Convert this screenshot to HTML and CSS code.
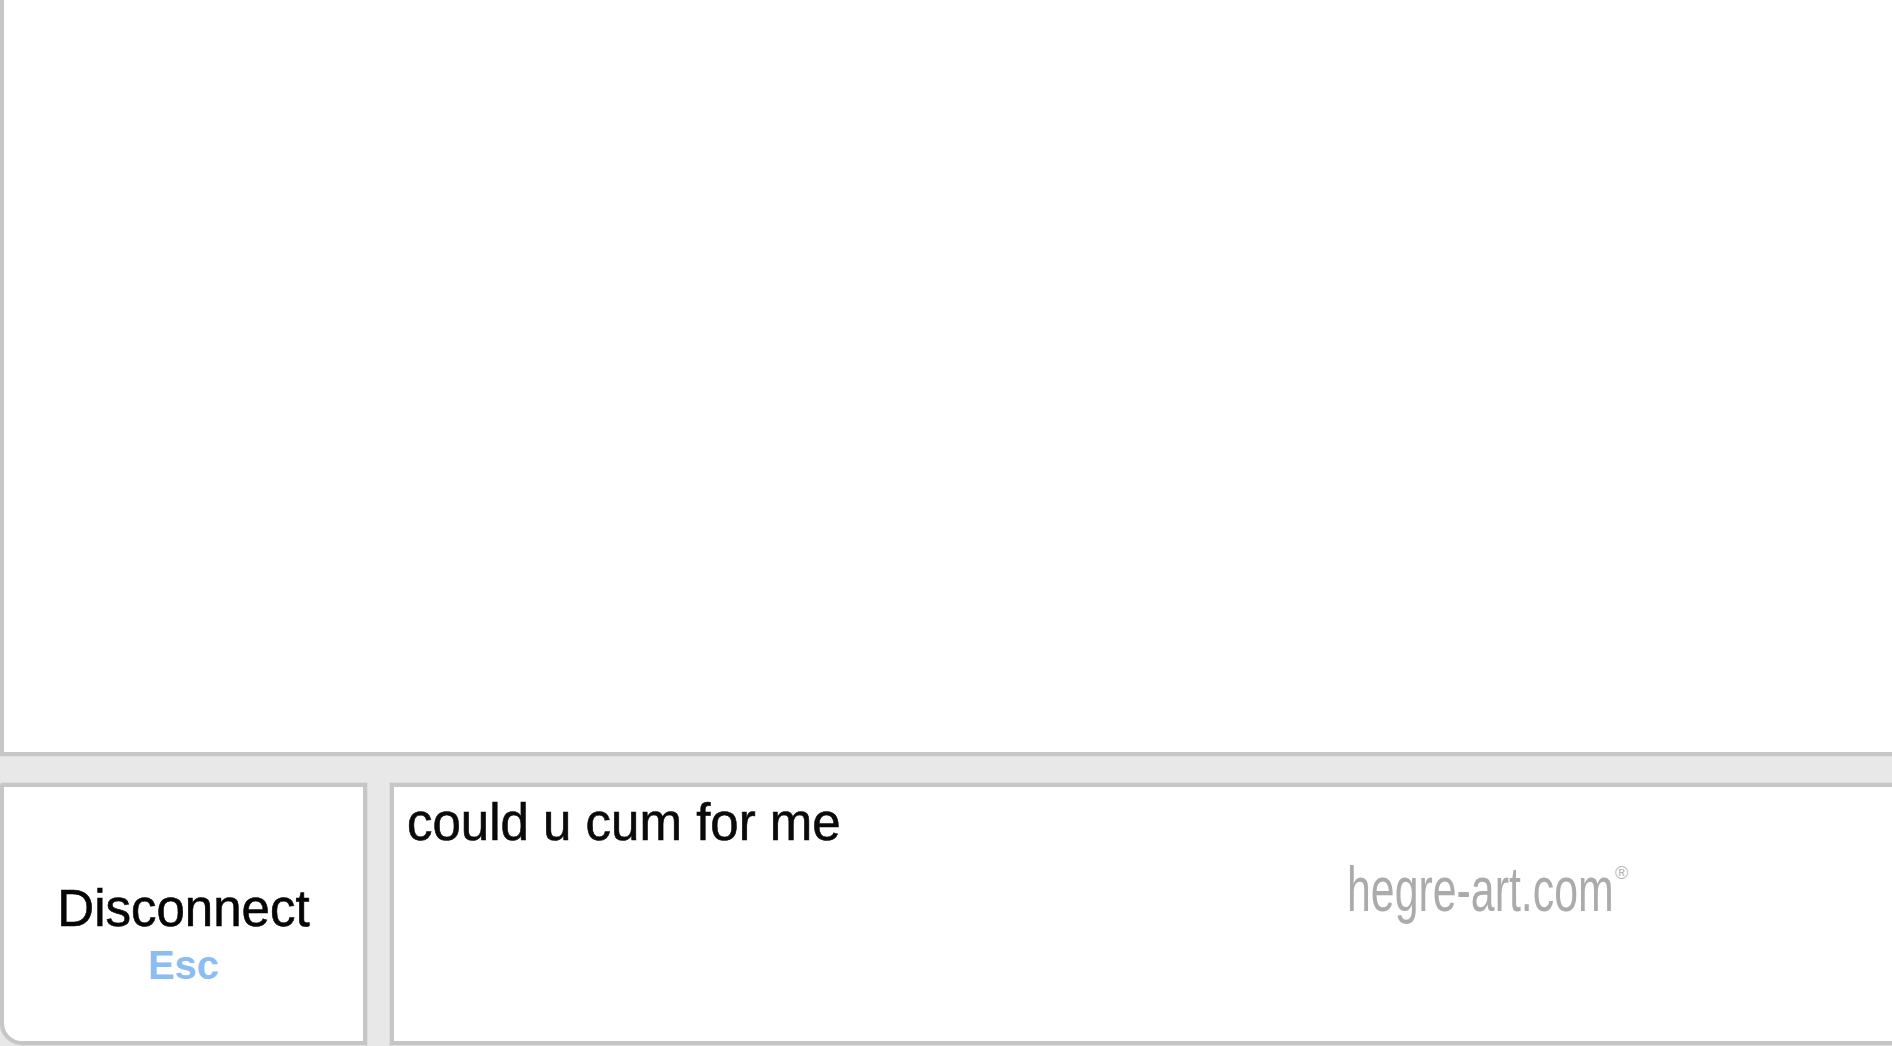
FILE: index.html
```html
<!DOCTYPE html>
<html lang="en">
<head>
<meta charset="utf-8">
<title>Chat</title>
<link rel="stylesheet" href="styles.css">
</head>
<body>
<div class="app">
  <div class="log"></div>
  <div class="controls">
    <button class="disconnect" type="button">
      <span class="btn-label">Disconnect</span>
      <span class="btn-key">Esc</span>
    </button>
    <div class="input-wrap">
      <textarea class="chat-input" rows="3">could u cum for me</textarea>
      <div class="watermark"><span class="wm-text">hegre-art.com</span><span class="wm-reg">&reg;</span></div>
    </div>
  </div>
</div>
</body>
</html>
```

FILE: styles.css
```css
html, body {
  margin: 0;
  padding: 0;
}

body {
  background: #e8e8e8;
  overflow: hidden;
  font-family: "Liberation Sans", Arial, sans-serif;
  width: 1892px;
  height: 1046px;
}

.app {
  width: 1930px;
  height: 1046px;
  display: flex;
  flex-direction: column;
  gap: 27px;
}

.log {
  box-sizing: border-box;
  height: 766px;
  margin-top: -10px;
  flex: none;
  background: #fff;
  border: 4px solid #c6c6c6;
  border-top: none;
  box-shadow: 0 0 0 1px #dedede;
}

.controls {
  display: flex;
  gap: 23px;
  height: 262px;
  flex: none;
}

.disconnect {
  box-sizing: border-box;
  width: 367px;
  flex: none;
  margin: 0;
  background: #fff;
  border: 4px solid #c6c6c6;
  border-radius: 3px 0 0 22px;
  box-shadow: 0 0 0 1px #dedede;
  display: flex;
  flex-direction: column;
  align-items: center;
  justify-content: flex-start;
  padding: 96px 0 0 0;
  font-family: "Liberation Sans", Arial, sans-serif;
  cursor: pointer;
}

.btn-label {
  font-size: 51px;
  line-height: 1;
  color: #050505;
  -webkit-text-stroke: 0.6px #050505;
}

.btn-key {
  margin-top: 11px;
  font-size: 40px;
  font-weight: bold;
  line-height: 1;
  color: #8cbdf2;
}

.input-wrap {
  position: relative;
  flex: 1;
  display: flex;
}

.chat-input {
  box-sizing: border-box;
  flex: 1;
  margin: 0;
  background: #fff;
  border: 4px solid #c6c6c6;
  border-radius: 0;
  box-shadow: 0 0 0 1px #dedede;
  padding: 10px 13px;
  font-family: "Liberation Sans", Arial, sans-serif;
  font-size: 51px;
  line-height: 1;
  color: #0a0a0a;
  -webkit-text-stroke: 0.6px #0a0a0a;
  resize: none;
  overflow: hidden;
  outline: none;
}

.watermark {
  position: absolute;
  left: 957px;
  top: 75px;
  pointer-events: none;
  color: #ababab;
}

.wm-text {
  display: inline-block;
  font-family: "Liberation Sans Narrow", "Liberation Sans", Arial, sans-serif;
  font-size: 63px;
  line-height: 1;
  transform: scaleX(0.68);
  transform-origin: 0 0;
  white-space: nowrap;
}

.wm-reg {
  position: absolute;
  left: 268px;
  top: 6px;
  font-size: 18px;
  line-height: 1;
  color: #b5b5b5;
}
```
